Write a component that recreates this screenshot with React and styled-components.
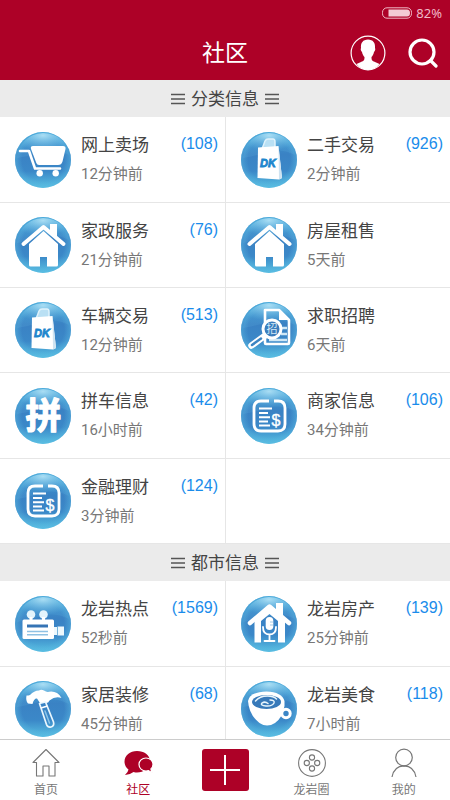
import React, { useState } from 'react'
import styled, { createGlobalStyle } from 'styled-components'

const groups = [
    {
        id: 'classified',
        title: '分类信息',
        items: [
            { name: '网上卖场', time: '12分钟前', count: 108, icon: 'cart' },
            { name: '二手交易', time: '2分钟前', count: 926, icon: 'bag' },
            { name: '家政服务', time: '21分钟前', count: 76, icon: 'house' },
            { name: '房屋租售', time: '5天前', icon: 'house' },
            { name: '车辆交易', time: '12分钟前', count: 513, icon: 'bag' },
            { name: '求职招聘', time: '6天前', icon: 'resume' },
            { name: '拼车信息', time: '16小时前', count: 42, icon: 'carpool' },
            { name: '商家信息', time: '34分钟前', count: 106, icon: 'bill' },
            { name: '金融理财', time: '3分钟前', count: 124, icon: 'bill' },
        ],
    },
    {
        id: 'city',
        title: '都市信息',
        items: [
            { name: '龙岩热点', time: '52秒前', count: 1569, icon: 'camera' },
            { name: '龙岩房产', time: '25分钟前', count: 139, icon: 'studio' },
            { name: '家居装修', time: '45分钟前', count: 68, icon: 'hammer' },
            { name: '龙岩美食', time: '7小时前', count: 118, icon: 'cup' },
        ],
    },
]

const glyphs = {
    cart: (
        <>
            <path d="M5 19h9l6 17.500h25" fill="none" stroke="#fff" strokeWidth="2.600" strokeLinecap="round" strokeLinejoin="round" />
            <path d="M18 14h30q3 0 2.500 3l-3 12.500q-1 3.500-4.500 3.500H24q-2 0-2.700-2L16 17q-.8-3 2-3z" fill="#fff" />
            <circle cx="24.700" cy="41.200" r="3.200" fill="#fff" />
            <circle cx="40.700" cy="41.200" r="3.200" fill="#fff" />
        </>
    ),
    bag: (
        <>
            <path d="M21 17l3-8q1-2 3-2h5q2 0 2 3v6" fill="#b9e0f4" stroke="#dff2fb" strokeWidth="1.500" />
            <path d="M17 15.500L37.500 14l3.500 32-3 1.500L16.500 46z" fill="#fff" />
            <path d="M37.500 14l3.500 32-3 1.500z" fill="#cfe3f1" />
            <text x="19" y="35" fontFamily="Liberation Sans, sans-serif" fontSize="11" fontWeight="700" fontStyle="italic" fill="#1d86cd" stroke="#1d86cd" strokeWidth=".8">DK</text>
        </>
    ),
    house: (
        <>
            <path d="M35 15V7h7v14z" fill="#fff" />
            <path d="M8.500 27L28.500 10l20 17" fill="none" stroke="#fff" strokeWidth="4" strokeLinecap="round" strokeLinejoin="round" />
            <path d="M28.500 14L43 27v21q0 1.500-1.500 1.500h-9.500V40h-7v9.500h-9.500q-1.500 0-1.500-1.500V27z" fill="#fff" />
        </>
    ),
    resume: (
        <>
            <path d="M24 8h14l10 10v23q0 1-1 1H25q-1 0-1-1z" fill="none" stroke="#fff" strokeWidth="2.600" strokeLinejoin="round" />
            <path d="M38 8v10h10z" fill="#fff" />
            <path d="M40 26h6M40 32h6M28 38h18" stroke="#cfe8f6" strokeWidth="2.500" />
            <path d="M23.500 34L10.500 43.500" stroke="#fff" strokeWidth="6.500" strokeLinecap="round" />
            <path d="M20 36.500L11 43" stroke="#3b84c2" strokeWidth="2.500" strokeLinecap="round" />
            <circle cx="31" cy="27" r="9" fill="#3b7dbd" stroke="#fff" strokeWidth="3" />
            <text x="31" y="31" textAnchor="middle" fontFamily="Noto Sans CJK SC, sans-serif" fontSize="11" fontWeight="400" fill="#d5eaf7">招</text>
        </>
    ),
    carpool: (
        <text x="28.500" y="41" textAnchor="middle" fontFamily="Noto Sans CJK SC, sans-serif" fontSize="36" fontWeight="700" fill="#fff" stroke="#fff" strokeWidth="1.200" strokeLinejoin="round">拼</text>
    ),
    bill: (
        <>
            <path d="M28 13H20q-7 0-7 7v16q0 7 7 7h17q7 0 7-7V20q0-7-7-7h-4" fill="none" stroke="#fff" strokeWidth="2.800" />
            <path d="M18 20.500h13M18 25h9M18 29.200h11M18 33.400h9M18 37.600h11" stroke="#fff" strokeWidth="2" />
            <text x="35" y="38" textAnchor="middle" fontFamily="Liberation Sans, sans-serif" fontSize="16" fill="#fff" stroke="#fff" strokeWidth=".4">$</text>
        </>
    ),
    camera: (
        <>
            <circle cx="16" cy="18.500" r="4.300" fill="#e3f4fc" />
            <circle cx="28.500" cy="18.500" r="4.300" fill="#e3f4fc" />
            <path d="M16 21v4M28.500 21v4" stroke="#fff" strokeWidth="3" />
            <rect x="7.500" y="23.500" width="31.500" height="19.500" rx="1.500" fill="#fff" />
            <path d="M12 30h21" stroke="#3674b5" strokeWidth="3" />
            <path d="M12 35.500h21M12 38.700h21" stroke="#8fc1e3" strokeWidth="1.400" />
            <path d="M39 31h3.500v-.5H49v9h-6.500V39H39z" fill="#edf8fd" />
            <path d="M42.500 31v8" stroke="#76b4dc" />
        </>
    ),
    studio: (
        <>
            <path d="M35 15V7h7v14z" fill="#fff" />
            <path d="M9 27L28.500 10.500 48 27" fill="none" stroke="#fff" strokeWidth="4.500" strokeLinecap="round" strokeLinejoin="round" />
            <path d="M13.500 25l15-12.500L44 25v21.500h-7V25l-8.500-7-8.500 7v21.500h-6.500z" fill="#fff" />
            <rect x="24.700" y="21" width="7.600" height="13" rx="3.800" fill="#fff" />
            <path d="M22 31q0 7.500 6.500 7.500T35 31M28.500 38.500V44M23.500 45h10" fill="none" stroke="#fff" strokeWidth="1.800" strokeLinecap="round" />
            <path d="M29 26h3M29 29h3" stroke="#8abce0" strokeWidth=".8" />
        </>
    ),
    hammer: (
        <>
            <path d="M11.500 14.500q2 0 3.500-.5 4-4.500 9-4.500 2-1.500 5 0 2.500 1.800 5 1.300 8-1.300 12.500 6.200-6-2.500-12 2.500-1 2.500-3.500 2.500H25l-3-4.500q-3-.5-4.500 5.500l-4.500-.5q-2.500-3-1.500-8z" fill="#fff" />
            <path d="M24.500 22.500l6-1.500 8 20q1 4-2.500 5-3.200.8-4.500-2.500z" fill="none" stroke="#eaf6fd" strokeWidth="1.700" strokeLinejoin="round" />
            <path d="M26 27l6.500-2" stroke="#fff" strokeWidth="1.500" />
            <path d="M30 30l4.500 12" stroke="#8ec5e7" strokeWidth="1.500" strokeLinecap="round" />
        </>
    ),
    cup: (
        <>
            <path d="M7 20q1.500-9 18.500-9.500Q41 11 43.500 20v5q-2 12-9.500 17-8 5-15.500 0Q8 34 7 20z" fill="#fff" />
            <circle cx="45" cy="32.500" r="4.200" fill="none" stroke="#fff" strokeWidth="3" />
            <ellipse cx="25.500" cy="21" rx="14.500" ry="7" fill="#3779b9" />
            <path d="M14.500 20q4-5 12-5 6 0 9 3M29 19q5 0 4 3-2 3.500-8 3-6-.5-4-3 3-2 6 .5" fill="none" stroke="#e8f5fc" strokeWidth="1.500" strokeLinecap="round" />
        </>
    ),
}

function CategoryIcon({ name }) {
    return (
        <Orb viewBox="0 0 56 56" aria-hidden="true">
            <circle cx="28" cy="28" r="28" fill="url(#orbBase)" />
            <circle cx="28" cy="28" r="28" fill="url(#orbGlow)" />
            <path d="M2 26Q5 3 28 1q22 1 26 22-14-7-27-3T2 26z" fill="url(#orbShine)" />
            {glyphs[name]}
        </Orb>
    )
}

// gradients shared by every category icon
function OrbGradients() {
    return (
        <HiddenDefs aria-hidden="true">
            <defs>
                <linearGradient id="orbBase" x1="0" y1="0" x2="0" y2="1">
                    <stop offset="0" stopColor="#3f9fd5" />
                    <stop offset=".4" stopColor="#3a82c4" />
                    <stop offset=".7" stopColor="#3b88c8" />
                    <stop offset="1" stopColor="#58c0e2" />
                </linearGradient>
                <radialGradient id="orbGlow" cx=".5" cy=".5" r=".5">
                    <stop offset=".75" stopColor="#5bb9e2" stopOpacity="0" />
                    <stop offset="1" stopColor="#5bb9e2" stopOpacity=".5" />
                </radialGradient>
                <radialGradient id="orbShine" cx=".5" cy=".1" r=".6">
                    <stop offset="0" stopColor="#b5e4f7" stopOpacity=".9" />
                    <stop offset="1" stopColor="#6cc0e8" stopOpacity=".15" />
                </radialGradient>
            </defs>
        </HiddenDefs>
    )
}

function Bars() {
    return (
        <svg width="14" height="12" viewBox="0 0 14 12" aria-hidden="true">
            <path d="M0 1.500h14M0 6h14M0 10.500h14" stroke="#555" strokeWidth="1.400" />
        </svg>
    )
}

const tabIcons = {
    home: (
        <path d="M1 14.500L14 1.500l13 13h-4V28h-6V18h-6v10H4.500V14.500z" fill="none" stroke="#777" strokeWidth="1.100" strokeLinejoin="round" />
    ),
    community: (
        <>
            <path d="M13 3C6 3 .5 7.500.5 13.500q0 5 4 8-.5 3-3.500 5.500 5.500-.5 8.500-3 2 .5 3.500.5c7 0 13-4.500 13-11S20 3 13 3z" fill="#ad0127" />
            <path d="M22 10c-4 0-7 3-7 6.500s3 6.500 7 6.500q1.500 0 2.500-.4 2 1.600 4 1.600-1.500-1.500-1.600-3.300Q29 19 29 16.500c0-3.500-3-6.500-7-6.500z" fill="#ad0127" stroke="#fff" strokeWidth="1.200" />
        </>
    ),
    circle: (
        <g fill="none" stroke="#777" strokeWidth="1.100">
            <circle cx="14" cy="15" r="13.400" />
            <circle cx="14" cy="9.500" r="2.600" />
            <circle cx="14" cy="20.500" r="2.600" />
            <circle cx="8.800" cy="15" r="2.600" />
            <circle cx="19.200" cy="15" r="2.600" />
        </g>
    ),
    mine: (
        <g fill="none" stroke="#777" strokeWidth="1.200">
            <circle cx="14" cy="9.500" r="8.300" />
            <path d="M2 29q2-11 12-11.200Q24 18 26 29" />
        </g>
    ),
}

function Tab({ id, label, active, onSelect }) {
    return (
        <TabLink href={`#${id}`} $active={active} onClick={() => onSelect(id)}>
            <svg width="28" height="30" viewBox="0 0 28 30" overflow="visible" aria-hidden="true">{tabIcons[id]}</svg>
            <span>{label}</span>
        </TabLink>
    )
}

function App() {
    const [tab, setTab] = useState('community')

    return (
        <>
            <GlobalStyle />
            <OrbGradients />
            <Screen>
                <Header>
                    <StatusBar>
                        <svg width="30" height="12" viewBox="0 0 30 12" aria-hidden="true">
                            <rect x=".5" y=".8" width="29" height="10.400" rx="4.500" fill="none" stroke="#f0b9c6" />
                            <path d="M6.500 2.500H25q3 0 3 3.500t-3 3.500H6.500z" fill="#f3cbd4" />
                        </svg>
                        <span>82%</span>
                    </StatusBar>
                    <TitleBar>
                        <h1>社区</h1>
                        <Actions>
                            <IconButton type="button" aria-label="个人中心">
                                <svg width="36" height="36" viewBox="0 0 36 36">
                                    <circle cx="18" cy="18" r="16.900" fill="none" stroke="#fff" strokeWidth="1.200" />
                                    <path d="M18 4.500c5 0 7.500 3.500 7 8.500.6 1 .2 3-1 4-.5 2.500-1.500 4-2.500 5 0 3 .5 4 3.500 5l4.500 2Q25 34.900 18 34.900T6.500 29l4.500-2c3-1 3.500-2 3.500-5-1-1-2-2.500-2.500-5-1.200-1-1.600-3-1-4-.5-5 2-8.500 7-8.500z" fill="#fff" />
                                </svg>
                            </IconButton>
                            <IconButton type="button" aria-label="搜索">
                                <svg width="30" height="30" viewBox="0 0 30 30">
                                    <circle cx="14" cy="14" r="12" fill="none" stroke="#fff" strokeWidth="3.200" />
                                    <path d="M22.500 22.500l5.500 5.500" stroke="#fff" strokeWidth="3.200" strokeLinecap="round" />
                                </svg>
                            </IconButton>
                        </Actions>
                    </TitleBar>
                </Header>
                <Content>
                    {groups.map((group) => {
                        return <section key={group.id}>
                            <GroupTitle>
                                <Bars />
                                <h2>{group.title}</h2>
                                <Bars />
                            </GroupTitle>
                            <Grid>
                                {group.items.map((item) => {
                                    return <Cell key={item.name}>
                                        <CellLink href={`#${item.name}`}>
                                            <CategoryIcon name={item.icon} />
                                            <CellText>
                                                <strong>{item.name}</strong>
                                                <small>{item.time}</small>
                                            </CellText>
                                            {item.count && <Count>({item.count})</Count>}
                                        </CellLink>
                                    </Cell>
                                })}
                                {group.items.length % 2 === 1 && <Cell aria-hidden="true" />}
                            </Grid>
                        </section>
                    })}
                </Content>
                <TabBar>
                    <Tab id="home" label="首页" active={tab === 'home'} onSelect={setTab} />
                    <Tab id="community" label="社区" active={tab === 'community'} onSelect={setTab} />
                    <PostButton type="button" aria-label="发布">
                        <svg width="32" height="32" viewBox="0 0 32 32">
                            <path d="M16 1v30M1 16h30" stroke="#fff" strokeWidth="2" />
                        </svg>
                    </PostButton>
                    <Tab id="circle" label="龙岩圈" active={tab === 'circle'} onSelect={setTab} />
                    <Tab id="mine" label="我的" active={tab === 'mine'} onSelect={setTab} />
                </TabBar>
            </Screen>
        </>
    )
}

const GlobalStyle = createGlobalStyle`
    *{
        box-sizing: border-box;
        margin: 0;
        padding: 0;
    }
    body{
        background: #fff;
        color: #444;
        font-family: Roboto, 'Noto Sans CJK SC', sans-serif;
    }
    a{
        color: inherit;
        text-decoration: none;
    }
    svg{
        display: block;
        flex-shrink: 0;
    }
`;

const HiddenDefs = styled.svg`
    position: absolute;
    width: 0;
    height: 0;
`;

const Screen = styled.div`
    display: flex;
    flex-direction: column;
    height: 100vh;
`;

const Header = styled.header`
    flex-shrink: 0;
    background: #ad0127;
    color: #fff;
`;

const StatusBar = styled.div`
    display: flex;
    align-items: center;
    justify-content: flex-end;
    gap: 4px;
    height: 25px;
    padding-right: 8px;
    font-family: 'Noto Sans', sans-serif;
    font-size: 13px;
    line-height: 16px;
    color: #f0b9c6;
`;

const TitleBar = styled.div`
    display: grid;
    grid-template-columns: 1fr auto 1fr;
    align-items: center;
    height: 55px;
    padding: 0 12px;
    h1{
        grid-column: 2;
        padding-top: 2px;
        font-size: 23px;
        font-weight: 400;
        line-height: 32px;
    }
`;

const Actions = styled.div`
    display: flex;
    align-items: center;
    justify-content: flex-end;
    gap: 22px;
`;

const IconButton = styled.button`
    border: none;
    background: none;
    cursor: pointer;
`;

const Content = styled.main`
    flex: 1;
    min-height: 0;
    overflow-y: auto;
    scrollbar-width: none;
`;

const GroupTitle = styled.div`
    display: flex;
    align-items: center;
    justify-content: center;
    gap: 6px;
    height: 37px;
    background: #ebebeb;
    h2{
        font-size: 17px;
        font-weight: 400;
        line-height: 24px;
    }
`;

const Grid = styled.ul`
    display: grid;
    grid-template-columns: 1fr 1fr;
    grid-auto-rows: 86px 85px 85px;
    list-style: none;
`;

const Cell = styled.li`
    border-bottom: 1px solid #e6e6e6;
    &:nth-child(even){
        border-left: 1px solid #e6e6e6;
    }
`;

const CellLink = styled.a`
    display: flex;
    align-items: center;
    height: 100%;
    padding: 0 7px 0 15px;
`;

const Orb = styled.svg`
    width: 56px;
    height: 56px;
`;

const CellText = styled.div`
    display: flex;
    flex: 1;
    flex-direction: column;
    gap: 5px;
    margin-left: 10px;
    white-space: nowrap;
    strong{
        font-size: 17px;
        font-weight: 400;
        line-height: 24px;
    }
    small{
        font-size: 15px;
        font-weight: 400;
        line-height: 24px;
        color: #777;
    }
`;

const Count = styled.span`
    align-self: flex-start;
    margin-top: 16px;
    font-family: 'Liberation Sans', sans-serif;
    font-size: 16px;
    line-height: 22px;
    color: #1a8ceb;
`;

const TabBar = styled.nav`
    display: grid;
    grid-template-columns: 1fr 1fr 81px 1fr 1fr;
    flex-shrink: 0;
    height: 61px;
    border-top: 1px solid #ccc;
    background: #fff;
`;

const TabLink = styled.a`
    display: flex;
    flex-direction: column;
    align-items: center;
    gap: 4px;
    padding-top: 8px;
    font-size: 12px;
    line-height: 16px;
    color: ${({ $active }) => ($active ? '#ad0127' : '#777')};
`;

const PostButton = styled.button`
    display: grid;
    place-items: center;
    place-self: center;
    width: 47px;
    height: 42px;
    border: none;
    border-radius: 3px;
    background: #ad0127;
    cursor: pointer;
`;

export default App
